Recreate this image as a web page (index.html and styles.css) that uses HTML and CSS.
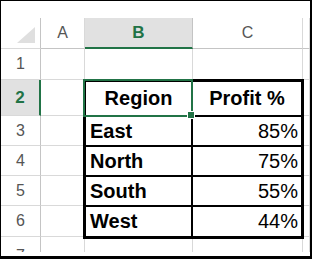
FILE: index.html
```html
<!DOCTYPE html>
<html>
<head>
<meta charset="utf-8">
<link rel="stylesheet" href="styles.css">
</head>
<body>
<div class="frame">
  <div class="sheet">
    <div class="cell hdr corner"><svg class="tri" width="18" height="16" viewBox="0 0 18 16"><polygon points="0,16 18,16 18,0" fill="#dfdfdf"/></svg></div>
    <div class="cell hdr col">A</div>
    <div class="cell hdr col sel-col">B</div>
    <div class="cell hdr col">C</div>
    <div class="cell hdr col"></div>

    <div class="cell hdr row">1</div>
    <div class="cell"></div>
    <div class="cell"></div>
    <div class="cell"></div>
    <div class="cell"></div>

    <div class="cell hdr row sel-row">2</div>
    <div class="cell"></div>
    <div class="cell dcol r2"></div>

    <div class="cell hdr row">3</div>
    <div class="cell"></div>
    <div class="cell dcol r3"></div>

    <div class="cell hdr row">4</div>
    <div class="cell"></div>
    <div class="cell dcol r4"></div>

    <div class="cell hdr row">5</div>
    <div class="cell"></div>
    <div class="cell dcol r5"></div>

    <div class="cell hdr row">6</div>
    <div class="cell"></div>
    <div class="cell dcol r6"></div>

    <div class="cell hdr row r7 r7-hdr">7</div>
    <div class="cell r7"></div>
    <div class="cell r7"></div>
    <div class="cell r7"></div>
    <div class="cell r7"></div>

    <div class="table">
      <div class="tc th">Region</div>
      <div class="tc th">Profit %</div>
      <div class="tc name">East</div>
      <div class="tc num">85%</div>
      <div class="tc name">North</div>
      <div class="tc num">75%</div>
      <div class="tc name">South</div>
      <div class="tc num">55%</div>
      <div class="tc name">West</div>
      <div class="tc num">44%</div>
      <div class="selection"></div>
      <div class="handle"></div>
    </div>
  </div>
</div>
</body>
</html>
```
FILE: styles.css
```css
html, body {
  margin: 0;
  padding: 0;
  background: #fff;
}
.frame {
  width: 312px;
  height: 259px;
  box-sizing: border-box;
  border-top: 1px solid #000;
  border-left: 1px solid #000;
  border-right: 2px solid #000;
  border-bottom: 3px solid #000;
  padding-top: 17px;
  background: #fff;
  overflow: hidden;
}
.sheet {
  display: grid;
  grid-template-columns: 40px 44px 108px 110px 1fr;
  grid-template-rows: 31px 31px 36px 30px 30px 30px 31px 30px;
  height: 234px;
  overflow: hidden;
  font-family: "Liberation Sans", Arial, sans-serif;
}
.cell {
  box-sizing: border-box;
  border-right: 1px solid #d9d9d9;
  border-bottom: 1px solid #d9d9d9;
  background: #fff;
}
.hdr {
  display: flex;
  align-items: center;
  justify-content: center;
  font-size: 16px;
  color: #555;
}
.corner {
  border-right-color: #c4c4c4;
  align-items: flex-end;
  justify-content: flex-end;
  padding: 0 5px 5px 0;
}
.tri { display: block; }
.col {
  border-bottom-color: #c4c4c4;
}
.row {
  border-right-color: #c4c4c4;
}
.sel-col {
  background: #e1e1e1;
  color: #217346;
  font-weight: bold;
  font-size: 17px;
  border-bottom: 2px solid #217346;
  border-right-color: #c4c4c4;
}
.sel-row {
  background: #e1e1e1;
  color: #217346;
  font-weight: bold;
  font-size: 17px;
  border-right: 2px solid #217346;
}
.dcol { grid-column: 5; }
.r2 { grid-row: 3; }
.r3 { grid-row: 4; }
.r4 { grid-row: 5; }
.r5 { grid-row: 6; }
.r6 { grid-row: 7; }
.r7 { border-bottom: none; }
.r7-hdr {
  align-items: flex-start;
  padding-top: 10px;
}

.table {
  grid-column: 3 / 5;
  grid-row: 3 / 8;
  margin: -1px -1px -2px -2px;
  box-sizing: border-box;
  border: 3px solid #000;
  background: #000;
  display: grid;
  grid-template-columns: 105px 108px;
  grid-template-rows: 33px 28px 28px 28px 29px;
  gap: 2px;
  position: relative;
  font-family: "Liberation Sans", Arial, sans-serif;
  font-size: 20px;
  color: #000;
}
.tc {
  background: #fff;
  display: flex;
  align-items: center;
  white-space: nowrap;
}
.th {
  font-weight: bold;
  justify-content: center;
}
.name {
  font-weight: bold;
  padding-left: 4px;
}
.num {
  justify-content: flex-end;
  padding-right: 3px;
}
.selection {
  position: absolute;
  left: -3px;
  top: -3px;
  width: 110px;
  height: 38px;
  box-sizing: border-box;
  border: 2px solid #217346;
}
.handle {
  position: absolute;
  left: 101px;
  top: 29px;
  width: 6px;
  height: 6px;
  background: #217346;
  border: 1px solid #fff;
}
```
